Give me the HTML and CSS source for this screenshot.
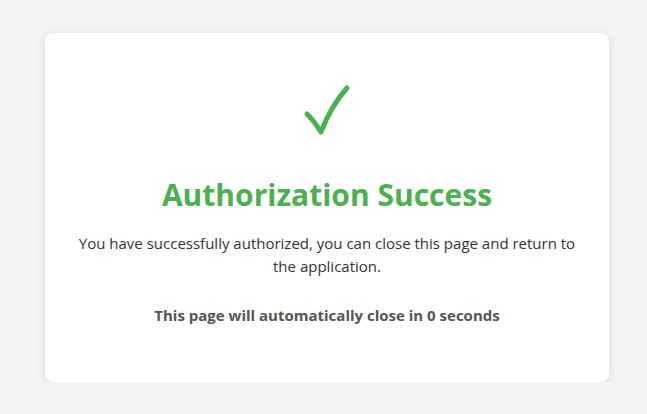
FILE: index.html
```html
<!DOCTYPE html>
<html lang="en">
<head>
  <meta charset="UTF-8" />
  <meta name="viewport" content="width=device-width, initial-scale=1" />
  <title>Authorization Success</title>
  <link rel="stylesheet" href="styles.css">
</head>
<body>
  <div class="page">
    <div class="card">
      <svg class="check" width="52" height="52" viewBox="0 0 52 52" aria-hidden="true">
        <path d="M6 30 Q13 37 20 48 Q30 22 46 4" />
      </svg>
      <h1>Authorization Success</h1>
      <p class="message">You have successfully authorized, you can close this page and return to the application.</p>
      <p class="countdown">This page will automatically close in <span id="seconds">0</span> seconds</p>
    </div>
  </div>
</body>
</html>
```

FILE: styles.css
```css
body {
  margin: 0;
  font-family: 'Open Sans', 'Noto Sans', sans-serif;
  background-color: #f4f4f4;
  color: #333;
}
.page {
  padding: 33px 0 0 45px;
}
.card {
  width: 564px;
  height: 349px;
  box-sizing: border-box;
  background: white;
  border-radius: 8px;
  box-shadow: 0 2px 10px rgba(0, 0, 0, 0.13);
  padding: 51px 30px 0;
  text-align: center;
}
.check {
  display: block;
  margin: 0 auto;
}
.check path {
  fill: none;
  stroke: #4caf50;
  stroke-width: 5;
  stroke-linecap: round;
  stroke-linejoin: round;
}
h1 {
  color: #4caf50;
  font-size: 30px;
  line-height: 36px;
  margin: 41px 0 0;
}
.message {
  font-size: 15px;
  line-height: 23px;
  margin: 19px 0 0;
}
.countdown {
  font-size: 15px;
  line-height: 23px;
  font-weight: bold;
  color: #555;
  margin: 26px 0 0;
}
```
